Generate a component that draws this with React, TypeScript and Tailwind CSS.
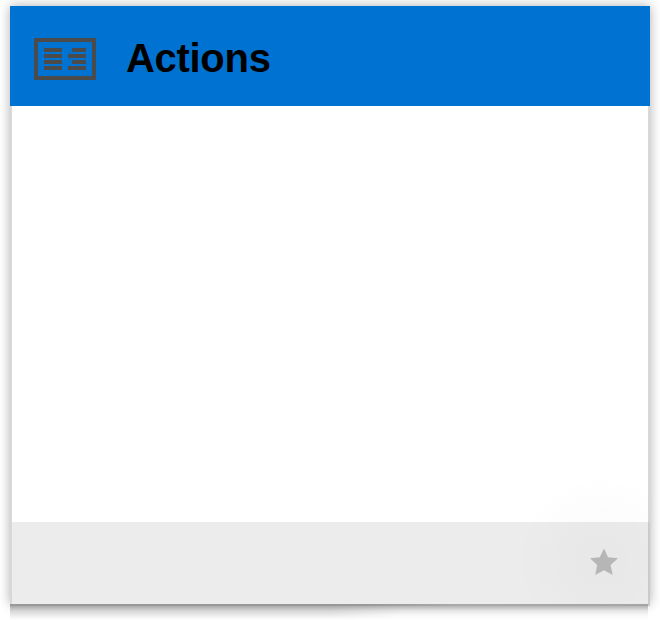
function PanelIcon() {
  return (
    <svg className="ml-6 h-[42px] w-[62px] shrink-0" viewBox="0 0 62 42" fill="none" stroke="#4b4b4b">
      <rect x="2" y="2" width="58" height="38" strokeWidth="4" />
      <path
        d="M10 12h18M10 18h18M10 24h18M10 30h18M38 12h14M34 18h18M38 24h14M34 30h18"
        strokeWidth="3.8"
      />
    </svg>
  );
}

function StarIcon() {
  return (
    <svg className="mb-[2px] mr-[30px] h-7 w-7" viewBox="0 0 28 28" fill="#b9b9b9">
      <path d="M14 .6 18 9.2 28 10.2 20.6 16.9 22.7 27.1 14 22.3 5.2 27.1 7.2 16.9 0 10.2 9.8 9.2Z" />
    </svg>
  );
}

export default function App() {
  return (
    <div className="h-[620px] w-[660px] overflow-hidden bg-white pl-[10px] pt-[6px] font-['Liberation_Sans',Arial,sans-serif]">
      <div className="w-[640px] shadow-[0_0_11px_rgba(0,0,0,0.32)]">
        <header className="flex h-[100px] items-center bg-[#0073d2] pt-[6px]">
          <PanelIcon />
          <h1 className="mb-[2px] ml-[30px] text-[40px] font-bold leading-[46px] tracking-[-0.3px] text-black">Actions</h1>
        </header>
        <div className="relative border-x-2 border-[#d8d8d8] bg-white">
          <main className="h-[416px]" />
          <footer className="flex h-[82px] items-center justify-end bg-[#ececec]">
            <StarIcon />
          </footer>
          <div className="pointer-events-none absolute bottom-0 -right-[2px] h-[125px] w-[130px] bg-[radial-gradient(circle_at_82px_82px,rgba(0,0,0,0.02),rgba(0,0,0,0.01)_45px,transparent_88px)]" />
          <div className="absolute -right-[2px] bottom-[-2px] h-[84px] w-[2px] bg-[#cbcbcb]" />
        </div>
      </div>
      <div className="relative w-[638px] bg-white">
        <div className="h-[2px] bg-[linear-gradient(90deg,#999_0%,#999_55%,#aaa_70%,#a5a5a5_100%)]" />
        <div className="grid h-[14px]">
          <div className="col-start-1 row-start-1 bg-[linear-gradient(180deg,#aaa_0%,#d6d6d6_35%,#f1f1f1_75%,#fff_100%)]" />
          <div className="col-start-1 row-start-1 bg-[linear-gradient(180deg,#b5b5b5_0%,#e6e6e6_35%,#f8f8f8_65%,#fff_100%)] [mask-image:linear-gradient(90deg,transparent_50%,black_62%)]" />
        </div>
      </div>
    </div>
  );
}
